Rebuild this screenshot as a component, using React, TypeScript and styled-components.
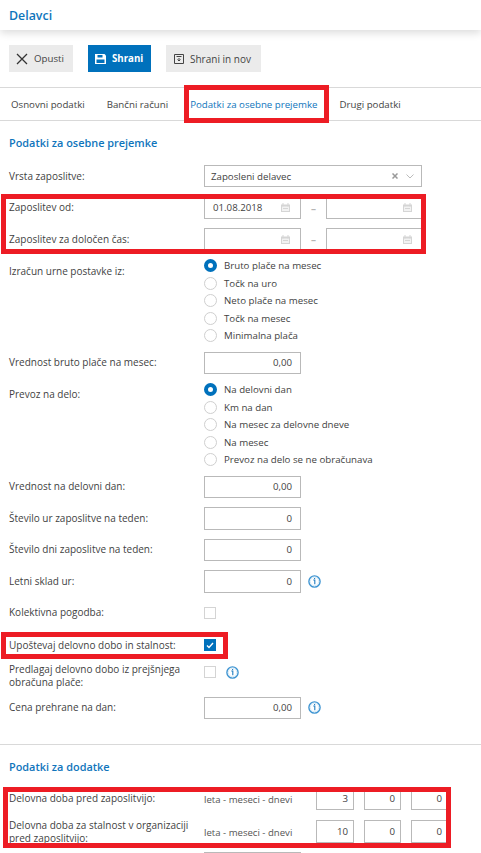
import React from 'react'
import styled, { createGlobalStyle } from 'styled-components'

const GlobalStyle = createGlobalStyle`
    html, body {
        margin: 0;
        padding: 0;
        height: 853px;
        overflow: hidden;
        background: #fff;
    }
    body {
        font-family: "Open Sans", "Liberation Sans", sans-serif;
        font-size: 10px;
        color: #3f3f3f;
    }
`

const BLUE = '#0f75bc'
const RED = '#ed1c24'
const LINE = '#b9b9b9'

const Page = styled.div`
    width: 481px;
    height: 853px;
    overflow: hidden;
`

const Header = styled.header`
    height: 30px;
    padding-left: 9px;
    display: flex;
    align-items: center;
    background: #fff;
    box-shadow: 0 3px 8px rgba(0, 0, 0, .14);
    font-size: 12.4px;
    font-weight: 600;
    color: ${BLUE};
`

const Toolbar = styled.div`
    display: flex;
    gap: 15px;
    padding: 15px 9px;
`

const Button = styled.div<{ $primary?: boolean; $wide?: boolean; $w: number }>`
    box-sizing: border-box;
    width: ${p => p.$w}px;
    height: 27px;
    padding-left: ${p => (p.$wide ? 8 : 7)}px;
    display: flex;
    align-items: center;
    gap: 6px;
    font-size: ${p => (p.$wide ? 10 : 9.7)}px;
    background: ${p => (p.$primary ? '#0071bc' : '#ebebeb')};
    color: ${p => (p.$primary ? '#fff' : '#444')};
    font-weight: ${p => (p.$primary ? 700 : 400)};
`

const Tabs = styled.nav`
    height: 32px;
    display: flex;
    align-items: center;
    gap: 22px;
    padding-left: 11px;
    font-size: 9.7px;
    border-top: 1px solid #d9d9d9;
    border-bottom: 1px solid #d9d9d9;
`

const Tab = styled.div<{ $active?: boolean }>`
    color: ${p => (p.$active ? BLUE : '#444')};
`

const MarkedTab = styled.div`
    margin: 0 -6px 0 -1px;
    padding: 0 6px 0 1px;
    height: 28px;
    display: flex;
    align-items: center;
    outline: 5px solid ${RED};
`

const Section = styled.section`
    padding: 14px 9px 0;
`

const SectionTitle = styled.h2<{ $after?: number }>`
    margin: 0 0 ${p => p.$after ?? 14}px;
    font-size: 10.9px;
    line-height: 16px;
    font-weight: 600;
    color: ${BLUE};
`

const Form = styled.div`
    display: flex;
    flex-direction: column;
    gap: 9px;
`

const Row = styled.div<{ $top?: boolean }>`
    display: flex;
    align-items: ${p => (p.$top ? 'flex-start' : 'center')};
    min-height: 22.5px;
`

const Label = styled.div<{ $drop?: number }>`
    flex: 0 0 195px;
    line-height: 13px;
    padding-top: ${p => p.$drop ?? 0}px;
`

const Marked = styled.div`
    outline: 5px solid ${RED};
    display: flex;
    flex-direction: column;
    overflow: hidden;
`

const DateRows = styled(Marked)`
    margin: 2px 0 0 -3px;
    padding-left: 3px;
    width: 412px;
    height: 50px;
    gap: 9px;
    > :first-child {
        margin-top: -2px;
    }
`

const CheckRow = styled(Marked)`
    margin: 3.5px 0 0 -3px;
    padding-left: 3px;
    width: 214px;
    height: 17px;
    justify-content: center;
`

const ServiceRows = styled(Marked)`
    margin-left: -1px;
    padding-left: 1px;
    width: 437px;
    height: 51px;
    gap: 8.5px;
    > :first-child {
        margin-top: -4px;
    }
`

const Field = styled.div<{ $w?: number }>`
    box-sizing: border-box;
    flex: none;
    width: ${p => p.$w ?? 97}px;
    height: 22.5px;
    padding: 0 8px;
    display: flex;
    align-items: center;
    justify-content: flex-end;
    border: 1px solid ${LINE};
    background: #fff;
    font-size: 9.7px;
`

const SelectField = styled(Field)`
    height: 22px;
    justify-content: space-between;
    padding: 0 7px 0 6px;
`

const SelectIcons = styled.span`
    display: flex;
    align-items: center;
    gap: 8px;
`

const DateField = styled(Field)`
    justify-content: space-between;
    padding: 0 10px 0 8px;
`

const DateRange = styled.div`
    display: flex;
    align-items: center;
`

const Dash = styled.span`
    width: 25px;
    text-align: center;
    font-weight: 700;
    color: #b5b5b5;
`

const RadioList = styled.div<{ $before?: number; $after?: number }>`
    display: flex;
    flex-direction: column;
    font-size: 9.7px;
    margin: ${p => p.$before ?? 0}px 0 ${p => p.$after ?? 0}px;
`

const RadioItem = styled.div`
    height: 17.5px;
    display: flex;
    align-items: center;
    gap: 7px;
`

const RadioDot = styled.span<{ $on?: boolean }>`
    box-sizing: border-box;
    width: 13px;
    height: 13px;
    border-radius: 50%;
    border: ${p => (p.$on ? '4px solid #0071bc' : '1px solid #cfcfcf')};
    background: #fff;
`

const Check = styled.span<{ $on?: boolean }>`
    box-sizing: border-box;
    width: 12px;
    height: 12px;
    display: flex;
    align-items: center;
    justify-content: center;
    border: 1px solid ${p => (p.$on ? '#0071bc' : '#d4d4d4')};
    background: ${p => (p.$on ? '#0071bc' : '#fff')};
`

const WithInfo = styled.div<{ $gap?: number; $top?: number }>`
    display: flex;
    align-items: center;
    gap: ${p => p.$gap ?? 7}px;
    margin-top: ${p => p.$top ?? 0}px;
`

const TightRow = styled(Row)`
    margin-top: -1px;
`

const Divider = styled.hr`
    margin: 24.5px 0 0;
    border: 0;
    border-top: 1px solid #d9d9d9;
`

const InlineRow = styled.div`
    display: flex;
    align-items: center;
`

const Units = styled.div`
    flex: 0 0 112px;
    padding-top: 2px;
    font-size: 9.6px;
    color: #555;
`

const Triple = styled.div`
    display: flex;
    gap: 10px;
`

const SmallField = styled(Field)`
    padding: 0 5px;
`

const CalendarIcon = () => (
    <svg width="9" height="9" viewBox="0 0 9 9">
        <path d="M0 1.5h9V9H0z" fill="#d5d5d5" />
        <path d="M1 3.5h7v4.5H1z" fill="#f2f2f2" />
        <path d="M2 3.5V0M7 3.5V0" stroke="#d5d5d5" />
        <path d="M2 5.5h5" stroke="#d5d5d5" />
    </svg>
)

const InfoIcon = () => (
    <svg width="13" height="13" viewBox="0 0 13 13" fill="none">
        <circle cx="6.5" cy="6.5" r="5.6" stroke="#3d94d2" strokeWidth="1.4" />
        <circle cx="6.5" cy="6.5" r="4.2" stroke="#cfe4f3" strokeWidth=".8" />
        <path d="M5.3 5h1.5v4.2" stroke="#1f7cc0" strokeWidth="1.1" />
        <path d="M6.6 2.9v1" stroke="#1f7cc0" strokeWidth="1.1" />
    </svg>
)

const DateInput = ({ value }: { value?: string }) => (
    <DateField>
        <span>{value}</span>
        <CalendarIcon />
    </DateField>
)

const Radios = ({ items, before, after }: { items: string[]; before: number; after: number }) => (
    <RadioList $before={before} $after={after}>
        {items.map((item, i) => (
            <RadioItem key={item}>
                <RadioDot $on={i === 0} />
                {item}
            </RadioItem>
        ))}
    </RadioList>
)

const Values = ({ values }: { values: string[] }) => (
    <Triple>
        {values.map((v, i) => (
            <SmallField key={i} $w={i === 0 ? 38 : 37}>{v}</SmallField>
        ))}
    </Triple>
)

export default function App() {
    return (
        <Page>
            <GlobalStyle />
            <Header>Delavci</Header>
            <Toolbar>
                <Button $w={64}>
                    <svg width="12" height="12" viewBox="0 0 12 12" fill="none">
                        <path d="M1 1l10 10M11 1L1 11" stroke="#333" strokeWidth="1.3" />
                    </svg>
                    Opusti
                </Button>
                <Button $w={63} $primary>
                    <svg width="11" height="10" viewBox="0 0 11 10">
                        <path d="M0 0h9.5L11 1.5V10H0z" fill="#fff" />
                        <path d="M2.5 1h5v2.5h-5zM1.5 5.5h8V9h-8z" fill="#0071bc" />
                    </svg>
                    Shrani
                </Button>
                <Button $w={95} $wide>
                    <svg width="10" height="10" viewBox="0 0 10 10" fill="none">
                        <path d="M.5.5h9v9h-9zM2.5 2.5h5M5 4v3M3.5 5.5L5 7l1.5-1.5" stroke="#444" />
                    </svg>
                    Shrani in nov
                </Button>
            </Toolbar>
            <Tabs>
                <Tab>Osnovni podatki</Tab>
                <Tab>Bančni računi</Tab>
                <MarkedTab>
                    <Tab $active>Podatki za osebne prejemke</Tab>
                </MarkedTab>
                <Tab>Drugi podatki</Tab>
            </Tabs>
            <Section>
                <SectionTitle>Podatki za osebne prejemke</SectionTitle>
                <Form>
                    <Row>
                        <Label>Vrsta zaposlitve:</Label>
                        <SelectField $w={218}>
                            <span>Zaposleni delavec</span>
                            <SelectIcons>
                                <svg width="6" height="6" viewBox="0 0 6 6" fill="none">
                                    <path d="M.5.5l5 5M5.5.5l-5 5" stroke="#999" strokeWidth="1.5" />
                                </svg>
                                <svg width="8" height="5" viewBox="0 0 8 5" fill="none">
                                    <path d="M.5.5L4 4 7.5.5" stroke="#bbb" />
                                </svg>
                            </SelectIcons>
                        </SelectField>
                    </Row>
                    <DateRows>
                        <Row>
                            <Label>Zaposlitev od:</Label>
                            <DateRange>
                                <DateInput value="01.08.2018" />
                                <Dash>–</Dash>
                                <DateInput />
                            </DateRange>
                        </Row>
                        <Row>
                            <Label>Zaposlitev za določen čas:</Label>
                            <DateRange>
                                <DateInput />
                                <Dash>–</Dash>
                                <DateInput />
                            </DateRange>
                        </Row>
                    </DateRows>
                    <Row $top>
                        <Label $drop={7}>Izračun urne postavke iz:</Label>
                        <Radios before={-0.5} after={-2} items={['Bruto plače na mesec', 'Točk na uro', 'Neto plače na mesec', 'Točk na mesec', 'Minimalna plača']} />
                    </Row>
                    <Row>
                        <Label>Vrednost bruto plače na mesec:</Label>
                        <Field>0,00</Field>
                    </Row>
                    <Row $top>
                        <Label $drop={5}>Prevoz na delo:</Label>
                        <Radios before={-2.25} after={-1.75} items={['Na delovni dan', 'Km na dan', 'Na mesec za delovne dneve', 'Na mesec', 'Prevoz na delo se ne obračunava']} />
                    </Row>
                    <Row>
                        <Label>Vrednost na delovni dan:</Label>
                        <Field>0,00</Field>
                    </Row>
                    <Row>
                        <Label>Število ur zaposlitve na teden:</Label>
                        <Field>0</Field>
                    </Row>
                    <Row>
                        <Label>Število dni zaposlitve na teden:</Label>
                        <Field>0</Field>
                    </Row>
                    <Row>
                        <Label>Letni sklad ur:</Label>
                        <WithInfo>
                            <Field>0</Field>
                            <InfoIcon />
                        </WithInfo>
                    </Row>
                    <Row>
                        <Label>Kolektivna pogodba:</Label>
                        <Check />
                    </Row>
                    <CheckRow>
                        <InlineRow>
                            <Label>Upoštevaj delovno dobo in stalnost:</Label>
                            <Check $on>
                                <svg width="8" height="7" viewBox="0 0 8 7" fill="none">
                                    <path d="M1 3.5L3 5.5 7 1" stroke="#fff" strokeWidth="1.4" />
                                </svg>
                            </Check>
                        </InlineRow>
                    </CheckRow>
                    <Row $top>
                        <Label>Predlagaj delovno dobo iz prejšnjega obračuna plače:</Label>
                        <WithInfo $gap={10} $top={3}>
                            <Check />
                            <InfoIcon />
                        </WithInfo>
                    </Row>
                    <TightRow>
                        <Label>Cena prehrane na dan:</Label>
                        <WithInfo>
                            <Field>0,00</Field>
                            <InfoIcon />
                        </WithInfo>
                    </TightRow>
                </Form>
            </Section>
            <Divider />
            <Section>
                <SectionTitle $after={17}>Podatki za dodatke</SectionTitle>
                <Form>
                    <ServiceRows>
                        <InlineRow>
                            <Label>Delovna doba pred zaposlitvijo:</Label>
                            <Units>leta - meseci - dnevi</Units>
                            <Values values={['3', '0', '0']} />
                        </InlineRow>
                        <InlineRow>
                            <Label>Delovna doba za stalnost v organizaciji pred zaposlitvijo:</Label>
                            <Units>leta - meseci - dnevi</Units>
                            <Values values={['10', '0', '0']} />
                        </InlineRow>
                    </ServiceRows>
                    <Row>
                        <Label />
                        <Field />
                    </Row>
                </Form>
            </Section>
        </Page>
    )
}
